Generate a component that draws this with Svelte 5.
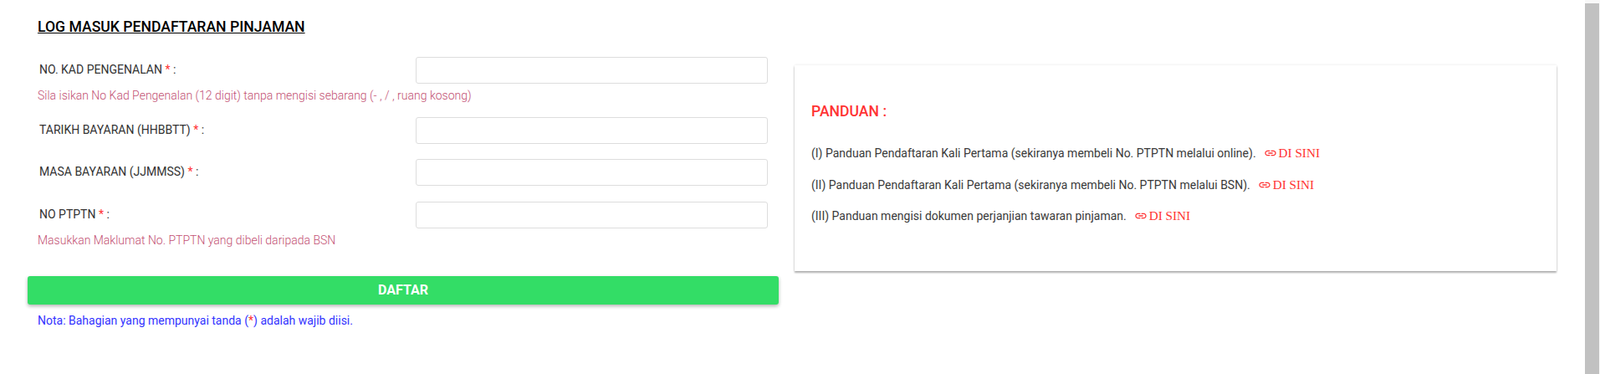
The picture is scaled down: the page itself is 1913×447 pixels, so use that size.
<script>
  const fields = [
    { label: 'NO. KAD PENGENALAN', hint: 'Sila isikan No Kad Pengenalan (12 digit) tanpa mengisi sebarang (- , / , ruang kosong)' },
    { label: 'TARIKH BAYARAN (HHBBTT)' },
    { label: 'MASA BAYARAN (JJMMSS)' },
    { label: 'NO PTPTN', hint: 'Masukkan Maklumat No. PTPTN yang dibeli daripada BSN' }
  ];
  const guides = [
    '(I) Panduan Pendaftaran Kali Pertama (sekiranya membeli No. PTPTN melalui online).',
    '(II) Panduan Pendaftaran Kali Pertama (sekiranya membeli No. PTPTN melalui BSN).',
    '(III) Panduan mengisi dokumen perjanjian tawaran pinjaman.'
  ];
</script>

<div class="page">
  <main class="content">
    <section class="left">
      <h1 class="title">LOG MASUK PENDAFTARAN PINJAMAN</h1>
      <form class="form" onsubmit={(e) => e.preventDefault()}>
        {#each fields as f}
          <div class="field">
            <div class="row">
              <label class="label" for={f.label}>{f.label} <span class="req">*</span> :</label>
              <input id={f.label} class="input" type="text" />
            </div>
            {#if f.hint}<p class="hint">{f.hint}</p>{/if}
          </div>
        {/each}
        <button class="submit" type="submit">DAFTAR</button>
        <p class="note">Nota: Bahagian yang mempunyai tanda (<span class="req">*</span>) adalah wajib diisi.</p>
      </form>
    </section>
    <section class="card">
      <h2 class="card-title">PANDUAN :</h2>
      <ul class="guides">
        {#each guides as g}
          <li class="guide">
            <span>{g}</span>
            <a class="link" href="#top">
              <svg class="icon" viewBox="0 0 24 24" width="16" height="16" aria-hidden="true">
                <path fill="currentColor" d="M3.9 12c0-1.71 1.39-3.1 3.1-3.1h4V7H7c-2.76 0-5 2.24-5 5s2.24 5 5 5h4v-1.9H7c-1.71 0-3.1-1.39-3.1-3.1zM8 13h8v-2H8v2zm9-6h-4v1.9h4c1.71 0 3.1 1.39 3.1 3.1s-1.39 3.1-3.1 3.1h-4V17h4c2.76 0 5-2.24 5-5s-2.24-5-5-5z"/>
              </svg>DI SINI</a>
          </li>
        {/each}
      </ul>
    </section>
  </main>
  <div class="scrollbar"><div class="thumb"></div></div>
</div>

<style>
  :global(body) { margin: 0; background: #fff; }
  .page {
    display: flex;
    height: 447px;
    overflow: hidden;
    font-family: Roboto, "Liberation Sans", sans-serif;
    font-weight: 300;
    font-size: 14px;
    color: #212529;
  }
  .content {
    flex: 1;
    display: flex;
    align-items: flex-start;
    gap: 19px;
    padding-left: 33px;
    min-width: 0;
  }
  .left { width: 898px; flex: none; }
  .title {
    margin: 22px 0 0 12px;
    font-size: 17.6px;
    line-height: 21px;
    font-weight: 500;
    color: #000;
    text-decoration: underline;
  }
  .form { margin-top: 25px; }
  .field { margin-bottom: 18.5px; }
  .row { display: flex; align-items: center; padding-left: 14px; height: 32px; }
  .label { width: 450px; color: #333; font-size: 14px; font-weight: 400; padding-bottom: 2px; }
  .req { color: #f33; }
  .input {
    width: 421px;
    height: 32px;
    box-sizing: border-box;
    border: 1px solid #ddd;
    border-radius: 3px;
    background: #fff;
    margin: 0;
    outline: none;
  }
  .hint {
    margin: 6px 0 -1px 12px;
    font-size: 14px;
    line-height: 16px;
    color: #c24f72;
    font-weight: 300;
  }
  .submit {
    display: block;
    width: 100%;
    height: 34px;
    margin-top: 36px;
    border: 0;
    border-radius: 3px;
    background: #33dd66;
    color: #fff;
    font-family: inherit;
    font-size: 16px;
    font-weight: 700;
    box-shadow: 0 2px 4px rgba(0,0,0,.3);
  }
  .note {
    margin: 11px 0 0 12px;
    font-size: 14px;
    line-height: 16px;
    color: #33f;
    font-weight: 400;
  }
  .card {
    flex: none;
    width: 911px;
    height: 246px;
    margin-top: 78px;
    box-sizing: border-box;
    padding: 45px 20px 0 20px;
    background: #fff;
    box-shadow: 0 2px 2px rgba(0,0,0,.3), 0 0 3px rgba(0,0,0,.1);
  }
  .card-title {
    margin: 0;
    font-size: 17.6px;
    line-height: 21px;
    font-weight: 500;
    color: #f33;
  }
  .guides { list-style: none; margin: 29px 0 0; padding: 0; }
  .guide { height: 37.5px; line-height: 20px; display: flex; color: #3a3a3a; font-weight: 400; }
  .link {
    display: inline-flex;
    align-items: center;
    margin-left: 9px;
    color: #f33;
    text-decoration: none;
    font-family: "Liberation Serif", serif;
    font-size: 15.2px;
    font-weight: 400;
    height: 20px;
  }
  .icon { margin-right: 2px; }
  .scrollbar { flex: none; width: 18px; margin-left: 15px; background: #f8f8f8; padding-top: 4px; box-sizing: border-box; }
  .thumb { width: 17px; height: 100%; background: #c1c1c1; }
</style>
